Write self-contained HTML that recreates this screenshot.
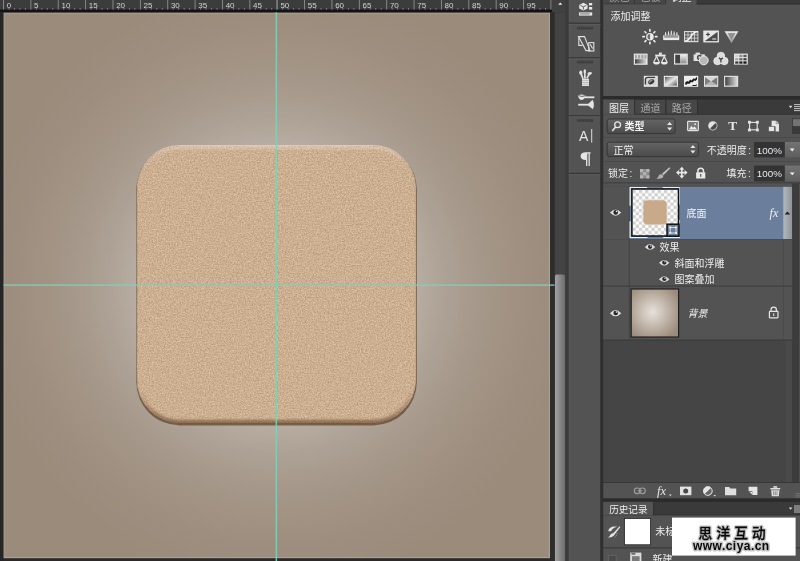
<!DOCTYPE html>
<html lang="zh-CN"><head><meta charset="utf-8"><title>Photoshop</title>
<style>
html,body{margin:0;padding:0;background:#282828;}
body{width:800px;height:561px;overflow:hidden;position:relative;font-family:'Liberation Sans','Noto Sans CJK SC',sans-serif;}
svg{position:absolute;left:0;top:0;display:block}
text{font-family:'Liberation Sans','Noto Sans CJK SC',sans-serif;}
</style></head><body>
<svg width="800" height="561" viewBox="0 0 800 561" style="will-change:transform">
<defs>
<radialGradient id="bgg" gradientUnits="userSpaceOnUse" cx="276" cy="285" r="340">
<stop offset="0" stop-color="#dcd5ce"/>
<stop offset="0.2" stop-color="#cdc4bc"/>
<stop offset="0.41" stop-color="#b8ada2"/>
<stop offset="0.5" stop-color="#ada195"/>
<stop offset="0.62" stop-color="#a49688"/>
<stop offset="0.76" stop-color="#9e8e7f"/>
<stop offset="0.88" stop-color="#9b8b7b"/>
<stop offset="1" stop-color="#9b8b7b"/>
</radialGradient>
<filter id="cork" x="0" y="0" width="100%" height="100%" color-interpolation-filters="sRGB">
<feTurbulence type="fractalNoise" baseFrequency="0.75" numOctaves="2" seed="5" result="n"/>
<feColorMatrix in="n" type="matrix" values="1 0 0 0 0  1 0 0 0 0  1 0 0 0 0  0 0 0 0 1" result="g"/>
<feGaussianBlur in="g" stdDeviation="0.4" result="gb"/>
<feComposite in="SourceGraphic" in2="gb" operator="arithmetic" k1="0" k2="1" k3="0.3" k4="-0.15" result="m"/>
<feComposite in="m" in2="SourceGraphic" operator="in"/>
</filter>
<clipPath id="sqclip"><rect x="137.1" y="146" width="278.5" height="277.3" rx="42.6"/></clipPath>
<filter id="b1" x="-5%" y="-5%" width="110%" height="110%"><feGaussianBlur stdDeviation="1.1"/></filter>
<linearGradient id="bev" gradientUnits="userSpaceOnUse" x1="0" y1="146" x2="0" y2="423.3"><stop offset="0" stop-color="#fff" stop-opacity="0.24"/><stop offset="0.08" stop-color="#fff" stop-opacity="0"/><stop offset="0.88" stop-color="#5a3c20" stop-opacity="0"/><stop offset="1" stop-color="#5a3c20" stop-opacity="0.55"/></linearGradient>
<linearGradient id="thumbg" x1="0" x2="1" y1="0" y2="0"><stop offset="0" stop-color="#a2a2a2"/><stop offset="1" stop-color="#6b6b6b"/></linearGradient>
<linearGradient id="ddg" x1="0" x2="0" y1="0" y2="1"><stop offset="0" stop-color="#646464"/><stop offset="1" stop-color="#4b4b4b"/></linearGradient>
<linearGradient id="btng" x1="0" x2="0" y1="0" y2="1"><stop offset="0" stop-color="#727272"/><stop offset="1" stop-color="#5f5f5f"/></linearGradient>
<linearGradient id="icg" x1="0" x2="0" y1="0" y2="1"><stop offset="0" stop-color="#f0f0f0"/><stop offset="1" stop-color="#8c8c8c"/></linearGradient>
<linearGradient id="ich" x1="0" x2="1" y1="0" y2="0"><stop offset="0" stop-color="#efefef"/><stop offset="1" stop-color="#6a6a6a"/></linearGradient>
<linearGradient id="ichr" x1="0" x2="1" y1="0" y2="0"><stop offset="0" stop-color="#444"/><stop offset="1" stop-color="#dadada"/></linearGradient>
<linearGradient id="post" x1="0" x2="1" y1="0" y2="1"><stop offset="0" stop-color="#555"/><stop offset="0.22" stop-color="#999"/><stop offset="0.5" stop-color="#e8e8e8"/><stop offset="0.78" stop-color="#999"/><stop offset="1" stop-color="#505050"/></linearGradient>
<linearGradient id="icd" x1="0" x2="1" y1="0" y2="1"><stop offset="0" stop-color="#f2f2f2"/><stop offset="1" stop-color="#5c5c5c"/></linearGradient>
<radialGradient id="lyrbg" cx="0.45" cy="0.48" r="0.62"><stop offset="0" stop-color="#e6e1dc"/><stop offset="0.45" stop-color="#c6bbb0"/><stop offset="1" stop-color="#9c8c7c"/></radialGradient>
<pattern id="chk" x="632.6" y="190" width="6.3" height="6.3" patternUnits="userSpaceOnUse"><rect width="6.3" height="6.3" fill="#fdfdfd"/><rect width="3.15" height="3.15" fill="#cfcfcf"/><rect x="3.15" y="3.15" width="3.15" height="3.15" fill="#cfcfcf"/></pattern>
<g id="eye"><path d="M-5.7 0.2 Q0 -6.6 5.7 0.2 Q0 6.4 -5.7 0.2Z" fill="#dedede"/><path d="M-5.2 -0.6 Q0 -6 5.2 -0.6" fill="none" stroke="#2e2e2e" stroke-width="0.7" opacity="0.7"/><circle cx="0.1" cy="0" r="2.3" fill="#262626"/><circle cx="0.9" cy="-0.9" r="0.8" fill="#e8e8e8"/></g>
<linearGradient id="icgv" x1="0" x2="0" y1="0" y2="1"><stop offset="0" stop-color="#555"/><stop offset="1" stop-color="#ddd"/></linearGradient>
<linearGradient id="sbg" x1="0" x2="1" y1="0" y2="0"><stop offset="0" stop-color="#b4b8be"/><stop offset="1" stop-color="#8f949c"/></linearGradient>
</defs>

<rect width="800" height="561" fill="#2a2a2a"/>
<rect x="3.3" y="12.5" width="546.7" height="545.7" fill="url(#bgg)"/>
<rect x="3.9" y="13.1" width="545.5" height="544.5" fill="none" stroke="#fff" stroke-opacity="0.2" stroke-width="1"/>
<rect x="0" y="0" width="552" height="9.6" fill="#3c3c3c"/>
<rect x="0" y="9.6" width="552" height="2.7" fill="#141414"/>
<rect x="0" y="12.3" width="3.4" height="549" fill="#262626"/>
<g><rect x="3.05" y="0" width="0.9" height="9.6" fill="#8e8e8e"/><text x="6.70" y="7.9" font-size="8" fill="#d2d2d2">0</text><rect x="8.52" y="8" width="0.9" height="1.6" fill="#8a8a8a"/><rect x="14.00" y="8" width="0.9" height="1.6" fill="#8a8a8a"/><rect x="19.47" y="8" width="0.9" height="1.6" fill="#8a8a8a"/><rect x="24.95" y="8" width="0.9" height="1.6" fill="#8a8a8a"/><rect x="30.42" y="0" width="0.9" height="9.6" fill="#8e8e8e"/><text x="34.07" y="7.9" font-size="8" fill="#d2d2d2">5</text><rect x="35.89" y="8" width="0.9" height="1.6" fill="#8a8a8a"/><rect x="41.37" y="8" width="0.9" height="1.6" fill="#8a8a8a"/><rect x="46.84" y="8" width="0.9" height="1.6" fill="#8a8a8a"/><rect x="52.32" y="8" width="0.9" height="1.6" fill="#8a8a8a"/><rect x="57.79" y="0" width="0.9" height="9.6" fill="#8e8e8e"/><text x="61.44" y="7.9" font-size="8" fill="#d2d2d2">10</text><rect x="63.26" y="8" width="0.9" height="1.6" fill="#8a8a8a"/><rect x="68.74" y="8" width="0.9" height="1.6" fill="#8a8a8a"/><rect x="74.21" y="8" width="0.9" height="1.6" fill="#8a8a8a"/><rect x="79.69" y="8" width="0.9" height="1.6" fill="#8a8a8a"/><rect x="85.16" y="0" width="0.9" height="9.6" fill="#8e8e8e"/><text x="88.81" y="7.9" font-size="8" fill="#d2d2d2">15</text><rect x="90.63" y="8" width="0.9" height="1.6" fill="#8a8a8a"/><rect x="96.11" y="8" width="0.9" height="1.6" fill="#8a8a8a"/><rect x="101.58" y="8" width="0.9" height="1.6" fill="#8a8a8a"/><rect x="107.06" y="8" width="0.9" height="1.6" fill="#8a8a8a"/><rect x="112.53" y="0" width="0.9" height="9.6" fill="#8e8e8e"/><text x="116.18" y="7.9" font-size="8" fill="#d2d2d2">20</text><rect x="118.00" y="8" width="0.9" height="1.6" fill="#8a8a8a"/><rect x="123.48" y="8" width="0.9" height="1.6" fill="#8a8a8a"/><rect x="128.95" y="8" width="0.9" height="1.6" fill="#8a8a8a"/><rect x="134.43" y="8" width="0.9" height="1.6" fill="#8a8a8a"/><rect x="139.90" y="0" width="0.9" height="9.6" fill="#8e8e8e"/><text x="143.55" y="7.9" font-size="8" fill="#d2d2d2">25</text><rect x="145.37" y="8" width="0.9" height="1.6" fill="#8a8a8a"/><rect x="150.85" y="8" width="0.9" height="1.6" fill="#8a8a8a"/><rect x="156.32" y="8" width="0.9" height="1.6" fill="#8a8a8a"/><rect x="161.80" y="8" width="0.9" height="1.6" fill="#8a8a8a"/><rect x="167.27" y="0" width="0.9" height="9.6" fill="#8e8e8e"/><text x="170.92" y="7.9" font-size="8" fill="#d2d2d2">30</text><rect x="172.74" y="8" width="0.9" height="1.6" fill="#8a8a8a"/><rect x="178.22" y="8" width="0.9" height="1.6" fill="#8a8a8a"/><rect x="183.69" y="8" width="0.9" height="1.6" fill="#8a8a8a"/><rect x="189.17" y="8" width="0.9" height="1.6" fill="#8a8a8a"/><rect x="194.64" y="0" width="0.9" height="9.6" fill="#8e8e8e"/><text x="198.29" y="7.9" font-size="8" fill="#d2d2d2">35</text><rect x="200.11" y="8" width="0.9" height="1.6" fill="#8a8a8a"/><rect x="205.59" y="8" width="0.9" height="1.6" fill="#8a8a8a"/><rect x="211.06" y="8" width="0.9" height="1.6" fill="#8a8a8a"/><rect x="216.54" y="8" width="0.9" height="1.6" fill="#8a8a8a"/><rect x="222.01" y="0" width="0.9" height="9.6" fill="#8e8e8e"/><text x="225.66" y="7.9" font-size="8" fill="#d2d2d2">40</text><rect x="227.48" y="8" width="0.9" height="1.6" fill="#8a8a8a"/><rect x="232.96" y="8" width="0.9" height="1.6" fill="#8a8a8a"/><rect x="238.43" y="8" width="0.9" height="1.6" fill="#8a8a8a"/><rect x="243.91" y="8" width="0.9" height="1.6" fill="#8a8a8a"/><rect x="249.38" y="0" width="0.9" height="9.6" fill="#8e8e8e"/><text x="253.03" y="7.9" font-size="8" fill="#d2d2d2">45</text><rect x="254.85" y="8" width="0.9" height="1.6" fill="#8a8a8a"/><rect x="260.33" y="8" width="0.9" height="1.6" fill="#8a8a8a"/><rect x="265.80" y="8" width="0.9" height="1.6" fill="#8a8a8a"/><rect x="271.28" y="8" width="0.9" height="1.6" fill="#8a8a8a"/><rect x="276.75" y="0" width="0.9" height="9.6" fill="#8e8e8e"/><text x="280.40" y="7.9" font-size="8" fill="#d2d2d2">50</text><rect x="282.22" y="8" width="0.9" height="1.6" fill="#8a8a8a"/><rect x="287.70" y="8" width="0.9" height="1.6" fill="#8a8a8a"/><rect x="293.17" y="8" width="0.9" height="1.6" fill="#8a8a8a"/><rect x="298.65" y="8" width="0.9" height="1.6" fill="#8a8a8a"/><rect x="304.12" y="0" width="0.9" height="9.6" fill="#8e8e8e"/><text x="307.77" y="7.9" font-size="8" fill="#d2d2d2">55</text><rect x="309.59" y="8" width="0.9" height="1.6" fill="#8a8a8a"/><rect x="315.07" y="8" width="0.9" height="1.6" fill="#8a8a8a"/><rect x="320.54" y="8" width="0.9" height="1.6" fill="#8a8a8a"/><rect x="326.02" y="8" width="0.9" height="1.6" fill="#8a8a8a"/><rect x="331.49" y="0" width="0.9" height="9.6" fill="#8e8e8e"/><text x="335.14" y="7.9" font-size="8" fill="#d2d2d2">60</text><rect x="336.96" y="8" width="0.9" height="1.6" fill="#8a8a8a"/><rect x="342.44" y="8" width="0.9" height="1.6" fill="#8a8a8a"/><rect x="347.91" y="8" width="0.9" height="1.6" fill="#8a8a8a"/><rect x="353.39" y="8" width="0.9" height="1.6" fill="#8a8a8a"/><rect x="358.86" y="0" width="0.9" height="9.6" fill="#8e8e8e"/><text x="362.51" y="7.9" font-size="8" fill="#d2d2d2">65</text><rect x="364.33" y="8" width="0.9" height="1.6" fill="#8a8a8a"/><rect x="369.81" y="8" width="0.9" height="1.6" fill="#8a8a8a"/><rect x="375.28" y="8" width="0.9" height="1.6" fill="#8a8a8a"/><rect x="380.76" y="8" width="0.9" height="1.6" fill="#8a8a8a"/><rect x="386.23" y="0" width="0.9" height="9.6" fill="#8e8e8e"/><text x="389.88" y="7.9" font-size="8" fill="#d2d2d2">70</text><rect x="391.70" y="8" width="0.9" height="1.6" fill="#8a8a8a"/><rect x="397.18" y="8" width="0.9" height="1.6" fill="#8a8a8a"/><rect x="402.65" y="8" width="0.9" height="1.6" fill="#8a8a8a"/><rect x="408.13" y="8" width="0.9" height="1.6" fill="#8a8a8a"/><rect x="413.60" y="0" width="0.9" height="9.6" fill="#8e8e8e"/><text x="417.25" y="7.9" font-size="8" fill="#d2d2d2">75</text><rect x="419.07" y="8" width="0.9" height="1.6" fill="#8a8a8a"/><rect x="424.55" y="8" width="0.9" height="1.6" fill="#8a8a8a"/><rect x="430.02" y="8" width="0.9" height="1.6" fill="#8a8a8a"/><rect x="435.50" y="8" width="0.9" height="1.6" fill="#8a8a8a"/><rect x="440.97" y="0" width="0.9" height="9.6" fill="#8e8e8e"/><text x="444.62" y="7.9" font-size="8" fill="#d2d2d2">80</text><rect x="446.44" y="8" width="0.9" height="1.6" fill="#8a8a8a"/><rect x="451.92" y="8" width="0.9" height="1.6" fill="#8a8a8a"/><rect x="457.39" y="8" width="0.9" height="1.6" fill="#8a8a8a"/><rect x="462.87" y="8" width="0.9" height="1.6" fill="#8a8a8a"/><rect x="468.34" y="0" width="0.9" height="9.6" fill="#8e8e8e"/><text x="471.99" y="7.9" font-size="8" fill="#d2d2d2">85</text><rect x="473.81" y="8" width="0.9" height="1.6" fill="#8a8a8a"/><rect x="479.29" y="8" width="0.9" height="1.6" fill="#8a8a8a"/><rect x="484.76" y="8" width="0.9" height="1.6" fill="#8a8a8a"/><rect x="490.24" y="8" width="0.9" height="1.6" fill="#8a8a8a"/><rect x="495.71" y="0" width="0.9" height="9.6" fill="#8e8e8e"/><text x="499.36" y="7.9" font-size="8" fill="#d2d2d2">90</text><rect x="501.18" y="8" width="0.9" height="1.6" fill="#8a8a8a"/><rect x="506.66" y="8" width="0.9" height="1.6" fill="#8a8a8a"/><rect x="512.13" y="8" width="0.9" height="1.6" fill="#8a8a8a"/><rect x="517.61" y="8" width="0.9" height="1.6" fill="#8a8a8a"/><rect x="523.08" y="0" width="0.9" height="9.6" fill="#8e8e8e"/><text x="526.73" y="7.9" font-size="8" fill="#d2d2d2">95</text><rect x="528.55" y="8" width="0.9" height="1.6" fill="#8a8a8a"/><rect x="534.03" y="8" width="0.9" height="1.6" fill="#8a8a8a"/><rect x="539.50" y="8" width="0.9" height="1.6" fill="#8a8a8a"/><rect x="544.98" y="8" width="0.9" height="1.6" fill="#8a8a8a"/><rect x="550.45" y="0" width="0.9" height="9.6" fill="#8e8e8e"/></g>
<rect x="276.4" y="0" width="1" height="9.6" fill="#7d8a86"/>
<rect x="550" y="12.3" width="4.6" height="549" fill="#2d2d2d"/>
<rect x="552" y="0" width="16.5" height="12.3" fill="#404040"/>
<rect x="554.6" y="12.3" width="13.9" height="549" fill="#434343"/>
<path d="M558.2 4.7 L560.3 2.4 L562.4 4.7Z" fill="#f0f0f0"/>
<rect x="555" y="274.5" width="10.2" height="290" rx="2" fill="url(#thumbg)"/>
<rect x="565.4" y="0" width="3.4" height="561" fill="#3b3b3b"/>
<g>
<rect x="136.3" y="145.8" width="280.5" height="279.6" rx="43.5" fill="#6a523c" opacity="0.85"/>
<rect x="136.9" y="145.1" width="279" height="277.6" rx="43" fill="#dfcbb0"/>
<rect x="137.1" y="146" width="278.5" height="277.3" rx="42.6" fill="#ccae91" filter="url(#cork)"/>
<g clip-path="url(#sqclip)"><rect x="137.1" y="146" width="278.5" height="277.3" rx="42.6" fill="none" stroke="url(#bev)" stroke-width="7" filter="url(#b1)"/></g>
</g>
<rect x="275.6" y="12.3" width="1.5" height="549" fill="#7cd2b8" opacity="0.9"/>
<rect x="3.5" y="284.4" width="551" height="1.4" fill="#7cd2b8" opacity="0.9"/>
<rect x="568.8" y="0" width="31.7" height="561" fill="#535353"/>
<rect x="568.8" y="0" width="0.8" height="561" fill="#5b5b5b"/>
<rect x="600.5" y="0" width="2.7" height="561" fill="#2f2f2f"/>
<rect x="568.8" y="22.6" width="31.7" height="1.3" fill="#363636"/><rect x="568.8" y="23.9" width="31.7" height="0.8" fill="#5e5e5e"/>
<rect x="568.8" y="57.2" width="31.7" height="1.3" fill="#363636"/><rect x="568.8" y="58.5" width="31.7" height="0.8" fill="#5e5e5e"/>
<rect x="568.8" y="115.2" width="31.7" height="1.3" fill="#363636"/><rect x="568.8" y="116.5" width="31.7" height="0.8" fill="#5e5e5e"/>
<rect x="568.8" y="172.8" width="31.7" height="1.3" fill="#363636"/><rect x="568.8" y="174.1" width="31.7" height="0.8" fill="#5e5e5e"/>
<rect x="577" y="26.8" width="16" height="2.6" fill="#3c3c3c"/>
<rect x="578.3" y="26.8" width="0.7" height="2.6" fill="#4b4b4b"/><rect x="580.3" y="26.8" width="0.7" height="2.6" fill="#4b4b4b"/><rect x="582.3" y="26.8" width="0.7" height="2.6" fill="#4b4b4b"/><rect x="584.3" y="26.8" width="0.7" height="2.6" fill="#4b4b4b"/><rect x="586.3" y="26.8" width="0.7" height="2.6" fill="#4b4b4b"/><rect x="588.3" y="26.8" width="0.7" height="2.6" fill="#4b4b4b"/><rect x="590.3" y="26.8" width="0.7" height="2.6" fill="#4b4b4b"/>
<rect x="577" y="60.8" width="16" height="2.6" fill="#3c3c3c"/>
<rect x="578.3" y="60.8" width="0.7" height="2.6" fill="#4b4b4b"/><rect x="580.3" y="60.8" width="0.7" height="2.6" fill="#4b4b4b"/><rect x="582.3" y="60.8" width="0.7" height="2.6" fill="#4b4b4b"/><rect x="584.3" y="60.8" width="0.7" height="2.6" fill="#4b4b4b"/><rect x="586.3" y="60.8" width="0.7" height="2.6" fill="#4b4b4b"/><rect x="588.3" y="60.8" width="0.7" height="2.6" fill="#4b4b4b"/><rect x="590.3" y="60.8" width="0.7" height="2.6" fill="#4b4b4b"/>
<rect x="577" y="119.2" width="16" height="2.6" fill="#3c3c3c"/>
<rect x="578.3" y="119.2" width="0.7" height="2.6" fill="#4b4b4b"/><rect x="580.3" y="119.2" width="0.7" height="2.6" fill="#4b4b4b"/><rect x="582.3" y="119.2" width="0.7" height="2.6" fill="#4b4b4b"/><rect x="584.3" y="119.2" width="0.7" height="2.6" fill="#4b4b4b"/><rect x="586.3" y="119.2" width="0.7" height="2.6" fill="#4b4b4b"/><rect x="588.3" y="119.2" width="0.7" height="2.6" fill="#4b4b4b"/><rect x="590.3" y="119.2" width="0.7" height="2.6" fill="#4b4b4b"/>
<g fill="#e6e6e6"><path d="M579.2 5 L583.4 2.8 L587.6 5 L587.6 8.6 L583.4 10.6 L579.2 8.6Z"/><rect x="589" y="3" width="3.2" height="2.4"/><rect x="589" y="7" width="3.2" height="2.6"/><rect x="579" y="12.4" width="13.2" height="3.2"/></g>
<path d="M580.4 5.4 L583.4 6.8 L586.4 5.4 M583.4 6.8 L583.4 9.6" stroke="#555" stroke-width="0.9" fill="none"/><rect x="580" y="13.3" width="9.6" height="1.2" fill="#8a8a8a"/>
<g fill="none" stroke="#e0e0e0" stroke-width="1.1"><path d="M578.5 36.6 L584.5 36.6 L590 50.6 L586 50.6 Z"/><path d="M578.8 37.4 L578.8 45.4 L582.4 45.4"/><rect x="588.8" y="42.6" width="5" height="8.4"/><path d="M590.2 44.2 L592.6 48.6"/></g>
<g fill="#e2e2e2"><rect x="582" y="78.6" width="7" height="7.4"/><path d="M579 72.6 q1.2 -3.4 3 -1.4 q0.8 1.6 0.2 3 l1.6 4.2 l-1.6 0.6 l-1.6 -4 q-1.4 -0.6 -1.6 -2.4z"/><path d="M583.6 70.6 q1.2 -2.6 2.4 0 q0.2 2 -0.4 3 l0.2 4.8 l-1.8 0 l0.1 -4.8 q-0.7 -1.2 -0.5 -3z"/><path d="M587.4 73.2 q2.4 -2.4 4.8 -0.4 q-0.6 2 -2.6 2.4 l-2 3.4 l-1.4 -0.8 l1.8 -3.2 q-0.8 -0.6 -0.6 -1.4z"/></g>
<path d="M582.2 80.6h6.6M582.2 82.5h6.6M582.2 84.3h6.6" stroke="#a2a2a2" stroke-width="0.6"/>
<g fill="#e4e4e4"><path d="M578 95.4 q3.8 -2 7.6 0.4 q-0.8 3.8 -3.8 4.2 q-3.2 -0.4 -3.8 -4.6z"/><rect x="585" y="96.4" width="9.4" height="1.8"/><rect x="578.2" y="103.8" width="10" height="1.8"/><path d="M587.2 104.7 L592.6 99.8 q2.6 4.6 0.2 9.4z"/></g><path d="M578.6 95.6 q3.2 1.6 6.4 0.2" stroke="#555" stroke-width="0.9" fill="none"/>
<text x="579" y="140.6" font-size="14" fill="#e6e6e6">A</text><rect x="591.2" y="129" width="1" height="13.6" fill="#dcdcdc"/>
<g fill="#e4e4e4"><path d="M586 152.2 h4.6 v1.2 h-0.8 v12.6 h-1.3 v-12.6 h-1.2 v12.6 h-1.3 v-6 q-5.4 0 -5.4 -3.9 q0 -3.9 5.4 -3.9z"/></g>
<rect x="603.2" y="0" width="196.8" height="96" fill="#535353"/>
<rect x="603.2" y="0" width="62" height="3.6" fill="#474747"/><rect x="603.2" y="3.4" width="62" height="0.9" fill="#3a3a3a"/>
<rect x="634" y="0" width="0.9" height="3.6" fill="#333"/><rect x="665.2" y="0" width="0.9" height="3.8" fill="#333"/>
<rect x="696.6" y="0" width="103.4" height="4" fill="#3a3a3a"/><rect x="696.6" y="3.6" width="103.4" height="0.9" fill="#2c2c2c"/>
<g font-size="10"><text x="609.4" y="0.8" fill="#aaa">颜色</text><text x="640.6" y="0.8" fill="#aaa">色板</text><text x="671.4" y="0.8" fill="#f2f2f2">调整</text></g>
<text x="610.6" y="19.8" font-size="10" fill="#ececec">添加调整</text>
<rect x="603.2" y="96" width="196.8" height="3.5" fill="#2b2b2b"/>
<g><path d="M655.50 36.70 L656.90 36.70" stroke="#e8e8e8" stroke-width="1.7" stroke-linecap="round"/><path d="M653.86 40.66 L654.85 41.65" stroke="#e8e8e8" stroke-width="1.7" stroke-linecap="round"/><path d="M649.90 42.30 L649.90 43.70" stroke="#e8e8e8" stroke-width="1.7" stroke-linecap="round"/><path d="M645.94 40.66 L644.95 41.65" stroke="#e8e8e8" stroke-width="1.7" stroke-linecap="round"/><path d="M644.30 36.70 L642.90 36.70" stroke="#e8e8e8" stroke-width="1.7" stroke-linecap="round"/><path d="M645.94 32.74 L644.95 31.75" stroke="#e8e8e8" stroke-width="1.7" stroke-linecap="round"/><path d="M649.90 31.10 L649.90 29.70" stroke="#e8e8e8" stroke-width="1.7" stroke-linecap="round"/><path d="M653.86 32.74 L654.85 31.75" stroke="#e8e8e8" stroke-width="1.7" stroke-linecap="round"/><circle cx="649.9" cy="36.7" r="3.8" fill="#ededed"/><path d="M650.1 34.0 a2.7 2.7 0 0 0 0 5.4z" fill="#6c6c6c"/></g>
<path d="M663.4 38.6 L663.4 35.4 L664.6 35.4 L664.6 33.8 L666.6 33.8 L666.6 35 L667.6 35 L667.6 33 L669.2 33 L669.2 34.6 L670.4 34.6 L670.4 32.6 L672 32.6 L672 34.6 L673.2 34.6 L673.2 33 L674.8 33 L674.8 35 L675.8 35 L675.8 33.8 L677.8 33.8 L677.8 35.4 L679 35.4 L679 38.6Z" fill="#9a9a9a"/>
<g fill="#ececec"><rect x="665.1" y="32.2" width="1" height="3.4"/><rect x="668" y="31.4" width="1" height="3.6"/><rect x="670.8" y="30.6" width="1" height="4"/><rect x="673.6" y="31.4" width="1" height="3.6"/><rect x="676.4" y="32.2" width="1" height="3.4"/><rect x="663.2" y="37.8" width="16" height="2.3"/><rect x="663.2" y="35.4" width="1" height="3"/><rect x="678.2" y="35.4" width="1" height="3"/></g>
<rect x="684" y="31" width="14.4" height="11.2" fill="#dadada"/><rect x="685.10" y="32.10" width="2.5" height="2.4" fill="#5a5a5a"/><rect x="688.40" y="32.10" width="2.5" height="2.4" fill="#5a5a5a"/><rect x="691.70" y="32.10" width="2.5" height="2.4" fill="#5a5a5a"/><rect x="695.00" y="32.10" width="2.5" height="2.4" fill="#5a5a5a"/><rect x="685.10" y="35.30" width="2.5" height="2.4" fill="#5a5a5a"/><rect x="688.40" y="35.30" width="2.5" height="2.4" fill="#5a5a5a"/><rect x="691.70" y="35.30" width="2.5" height="2.4" fill="#5a5a5a"/><rect x="695.00" y="35.30" width="2.5" height="2.4" fill="#5a5a5a"/><rect x="685.10" y="38.50" width="2.5" height="2.4" fill="#5a5a5a"/><rect x="688.40" y="38.50" width="2.5" height="2.4" fill="#5a5a5a"/><rect x="691.70" y="38.50" width="2.5" height="2.4" fill="#5a5a5a"/><rect x="695.00" y="38.50" width="2.5" height="2.4" fill="#5a5a5a"/><path d="M684.8 41.2 C691.6 41.2 690 31.8 697.6 31.8" stroke="#f4f4f4" stroke-width="1.5" fill="none"/>
<rect x="703.8" y="31" width="14.6" height="11" fill="#e4e4e4"/><path d="M704.6 41.2 L717.6 31.8 L717.6 41.2Z" fill="#4a4a4a"/><path d="M706 34.4h4M708 32.4v4" stroke="#333" stroke-width="1"/><path d="M712.2 39h4" stroke="#eee" stroke-width="1"/><rect x="703.8" y="31" width="14.6" height="11" fill="none" stroke="#eaeaea" stroke-width="0.9"/>
<path d="M724.6 31.2 L738.4 31.2 L731.5 43.2Z" fill="url(#icg)"/><path d="M727.6 33 L735.4 33 L731.5 39.8Z" fill="#7c7c7c" opacity="0.75"/>
<rect x="633.8" y="53.6" width="13.8" height="11.2" fill="#e6e6e6"/><rect x="635" y="54.8" width="11.4" height="3.8" fill="#a2a2a2"/><path d="M637.4 54.8v3.8M640.7 54.8v3.8M644 54.8v3.8" stroke="#e2e2e2" stroke-width="1"/><rect x="635" y="59.2" width="11.4" height="4.4" fill="url(#ichr)"/>
<g fill="#e8e8e8"><rect x="655.2" y="54.6" width="10.4" height="1.9"/><rect x="659" y="52.6" width="2.8" height="2.2"/><path d="M653 62 h7 q-0.5 2.6 -3.5 2.6 q-3 0 -3.5 -2.6z"/><path d="M660.8 62 h7 q-0.5 2.6 -3.5 2.6 q-3 0 -3.5 -2.6z"/></g><path d="M656.5 56.4 L653.8 62 M656.5 56.4 L659.2 62 M664.3 56.4 L661.6 62 M664.3 56.4 L667 62" stroke="#e8e8e8" stroke-width="1.2" fill="none"/>
<rect x="674" y="53.6" width="13.8" height="11" fill="#e6e6e6"/><rect x="675.2" y="54.8" width="5" height="8.6" fill="#444"/><rect x="680.2" y="54.8" width="6.4" height="8.6" fill="url(#icg)"/>
<g fill="#e2e2e2"><rect x="693.6" y="54.4" width="11.2" height="6.6"/><rect x="695.6" y="52.6" width="4.4" height="2.2"/></g><circle cx="699.6" cy="57.4" r="2.7" fill="#4e4e4e"/><circle cx="699.6" cy="57.4" r="1.2" fill="#cfcfcf"/><circle cx="703.8" cy="60.4" r="4.4" fill="#b8b8b8" stroke="#ececec" stroke-width="1"/>
<g fill="#dcdcdc" stroke="#f2f2f2" stroke-width="0.7"><circle cx="720.9" cy="56" r="3.8"/><circle cx="717.5" cy="61" r="3.8"/><circle cx="724.3" cy="61" r="3.8"/></g><path d="M720.9 59.6 l-2 -1.8 M720.9 59.6 l2 -1.8 M720.9 59.6 v3" stroke="#3c3c3c" stroke-width="1.3" fill="none"/>
<rect x="734" y="53.6" width="13.8" height="11" fill="#e6e6e6"/><rect x="735.2" y="54.8" width="3.2" height="2.3" fill="#cfcfcf"/><rect x="739.3" y="54.8" width="3.2" height="2.3" fill="#8e8e8e"/><rect x="743.4" y="54.8" width="3.2" height="2.3" fill="#5a5a5a"/><rect x="735.2" y="58.1" width="3.2" height="2.3" fill="#a8a8a8"/><rect x="739.3" y="58.1" width="3.2" height="2.3" fill="#6a6a6a"/><rect x="743.4" y="58.1" width="3.2" height="2.3" fill="#444"/><rect x="735.2" y="61.4" width="3.2" height="2.3" fill="#3c3c3c"/><rect x="739.3" y="61.4" width="3.2" height="2.3" fill="#222"/><rect x="743.4" y="61.4" width="3.2" height="2.3" fill="#111"/>
<rect x="643.8" y="75.8" width="14" height="11" fill="#e8e8e8"/><rect x="645" y="77" width="11.6" height="8.6" fill="#d4d4d4"/><path d="M645.4 84.6 L645.4 79 Q645.8 77.4 648 77.4 L655 77.4" stroke="#3c3c3c" stroke-width="1.4" fill="none"/><ellipse cx="651.2" cy="81.8" rx="3.3" ry="2.3" transform="rotate(-32 651.2 81.8)" fill="#3a3a3a"/><path d="M648.4 83.4 A3.3 2.3 -32 0 1 653.4 79.8Z" fill="#9a9a9a"/>
<rect x="663.8" y="75.8" width="14.2" height="11" fill="#e4e4e4"/><rect x="665" y="77" width="11.8" height="8.6" fill="url(#post)"/>
<rect x="684" y="75.8" width="14.2" height="11" fill="#eeeeee"/><path d="M685.2 84.4 L685.2 82.6 L687.2 81 L688.4 81.8 L690.4 79.6 L691.6 80.4 L693.6 78.2 L694.8 79 L697 76.8 L697 79.4 L695.4 81 L694.2 80.4 L692.4 82.6 L691 82 L689.2 84 L687.8 83.4 L686.4 84.8Z" fill="#1c1c1c"/><path d="M692.4 85.5 h3.6 l1 -0.9" stroke="#1c1c1c" stroke-width="1" fill="none"/>
<rect x="704" y="75.8" width="14.2" height="11" fill="#e6e6e6"/><path d="M705 77 L711.1 81.3 L705 85.6Z" fill="#808080"/><path d="M717.2 77 L711.1 81.3 L717.2 85.6Z" fill="#7a7a7a"/><path d="M705 77 L717.2 77 L711.1 81.3Z" fill="#d6d6d6"/><path d="M705 85.6 L717.2 85.6 L711.1 81.3Z" fill="#b4b4b4"/>
<rect x="724" y="75.8" width="14.2" height="11" fill="#dcdcdc"/><rect x="725.2" y="77" width="11.8" height="8.6" fill="url(#ichr)"/>
<rect x="603.2" y="99.5" width="196.8" height="15" fill="#3a3a3a"/>
<rect x="603.2" y="99.5" width="31" height="15.2" fill="#535353"/>
<rect x="635" y="100" width="30.4" height="14" fill="#474747"/><rect x="666.2" y="100" width="30.8" height="14" fill="#474747"/>
<rect x="634.2" y="99.5" width="0.9" height="14.6" fill="#2e2e2e"/><rect x="665.4" y="99.5" width="0.9" height="14.6" fill="#2e2e2e"/><rect x="697" y="99.5" width="0.9" height="14.6" fill="#2e2e2e"/>
<rect x="635" y="113.8" width="165" height="0.9" fill="#2e2e2e"/>
<g font-size="10"><text x="609" y="112" fill="#f0f0f0">图层</text><text x="640.4" y="112" fill="#a8a8a8">通道</text><text x="671.8" y="112" fill="#a8a8a8">路径</text></g>
<path d="M788.8 105.8 h3.6 l-1.8 2.4z" fill="#d8d8d8"/><path d="M794 104.6h6M794 106.6h6M794 108.6h6M794 110.6h6" stroke="#cfcfcf" stroke-width="0.9"/>
<rect x="603.2" y="114.7" width="196.8" height="71.5" fill="#535353"/>
<rect x="603.2" y="137.2" width="196.8" height="0.8" fill="#484848"/><rect x="603.2" y="161.2" width="196.8" height="0.8" fill="#484848"/>
<rect x="607.2" y="119" width="67.8" height="14.6" rx="2.2" fill="url(#ddg)" stroke="#333" stroke-width="0.9"/>
<circle cx="617.6" cy="124.8" r="2.9" fill="none" stroke="#e8e8e8" stroke-width="1.3"/><path d="M615.4 127.2 L612.6 130.4" stroke="#e8e8e8" stroke-width="1.5" stroke-linecap="round"/>
<text x="624.6" y="130.4" font-size="10" font-weight="bold" fill="#f2f2f2">类型</text>
<path d="M667 125 l2.6 -3 l2.6 3z M667 127.6 l2.6 3 l2.6 -3z" fill="#e6e6e6"/>
<rect x="687.6" y="121.4" width="10.8" height="9.2" rx="0.6" fill="#777" stroke="#e2e2e2" stroke-width="1.1"/><path d="M688.8 129.6 L691.4 126 L693 127.8 L694.6 126.6 L697.2 129.6Z" fill="#ededed"/><circle cx="695.2" cy="124.2" r="0.9" fill="#ededed"/>
<circle cx="712.8" cy="125.8" r="4.6" fill="#e2e2e2"/><path d="M710.1 128.5 A3.8 3.8 0 0 0 715.5 123.1Z" fill="#4a4a4a"/>
<text x="728.2" y="130.2" font-size="13.4" font-weight="bold" fill="#e8e8e8" style="font-family:'Liberation Serif',serif">T</text>
<rect x="749.6" y="122.4" width="7.6" height="7.4" fill="none" stroke="#e4e4e4" stroke-width="1.1"/><g fill="#e4e4e4"><rect x="748" y="120.8" width="2.8" height="2.8"/><rect x="756" y="120.8" width="2.8" height="2.8"/><rect x="748" y="128.6" width="2.8" height="2.8"/><rect x="756" y="128.6" width="2.8" height="2.8"/></g>
<path d="M771.6 120.8 h4.6 l2.8 2.8 v7.8 h-3.4 v-5 h-4z" fill="#e4e4e4"/><path d="M776.2 120.8 v2.8 h2.8" fill="none" stroke="#777" stroke-width="0.7"/><rect x="768.6" y="126.4" width="5.8" height="5" fill="#e4e4e4" stroke="#535353" stroke-width="0.6"/>
<rect x="792.6" y="118.8" width="8" height="7.4" fill="#737373"/><rect x="792.6" y="126.2" width="8" height="7.2" fill="#3a3a3a"/><rect x="792.6" y="118.8" width="8" height="14.6" fill="none" stroke="#333" stroke-width="0.7"/>
<rect x="607.2" y="142.2" width="91.2" height="14.4" rx="2.2" fill="url(#ddg)" stroke="#333" stroke-width="0.9"/>
<text x="613.6" y="154.2" font-size="10" fill="#f2f2f2">正常</text>
<path d="M690.4 148 l2.5 -2.9 l2.5 2.9z M690.4 150.6 l2.5 2.9 l2.5 -2.9z" fill="#e6e6e6"/>
<text x="706.8" y="153.6" font-size="10" fill="#ececec">不透明度<tspan dx="1.4">:</tspan></text>
<rect x="754" y="142" width="30" height="15.4" fill="#333"/><text x="756.8" y="153.8" font-size="9.8" fill="#e8e8f0">100%</text>
<rect x="784.2" y="142" width="15.8" height="15.4" fill="url(#btng)"/><rect x="784" y="142" width="0.8" height="15.4" fill="#333"/><path d="M789.8 148.6 h4.8 l-2.4 2.8z" fill="#f0f0f0"/>
<text x="608" y="176.6" font-size="10" fill="#ececec">锁定<tspan dx="1.6">:</tspan></text>
<rect x="640" y="169" width="9.4" height="9.4" fill="#8a8a8a"/><rect x="640.00" y="169.00" width="3.13" height="3.13" fill="#b4b4b4"/><rect x="646.26" y="169.00" width="3.13" height="3.13" fill="#b4b4b4"/><rect x="643.13" y="172.13" width="3.13" height="3.13" fill="#b4b4b4"/><rect x="640.00" y="175.26" width="3.13" height="3.13" fill="#b4b4b4"/><rect x="646.26" y="175.26" width="3.13" height="3.13" fill="#b4b4b4"/>
<path d="M669.4 167.2 L670.4 168.2 L663.4 175.2 L662 173.8Z" fill="#c4c4c4"/><path d="M656.4 178.4 q2 -0.8 2.4 -2.8 q1.4 -2.4 4 -0.6 q1.4 2.2 -1.2 3.2 q-2.6 0.8 -5.2 0.2z" fill="#b0b0b0"/>
<g fill="#e8e8e8"><path d="M681.8 166.8 l2.6 3 h-1.8 v2 h2 v-1.8 l3 2.6 l-3 2.6 v-1.8 h-2 v2 h1.8 l-2.6 3 l-2.6 -3 h1.8 v-2 h-2 v1.8 l-3 -2.6 l3 -2.6 v1.8 h2 v-2 h-1.8z"/></g>
<path d="M697.9 172.6 v-1.6 a2.8 2.8 0 0 1 5.6 0 v1.6" fill="none" stroke="#e8e8e8" stroke-width="1.5"/><rect x="696.1" y="172.2" width="9.2" height="6.4" rx="0.6" fill="#e8e8e8"/><rect x="700.1" y="174" width="1.2" height="2.8" fill="#555"/>
<text x="726.6" y="177.2" font-size="10" fill="#ececec">填充<tspan dx="1.4">:</tspan></text>
<rect x="754" y="165.6" width="30" height="15.8" fill="#333"/><text x="756.8" y="177.2" font-size="9.8" fill="#e8e8f0">100%</text>
<rect x="784.2" y="165.6" width="15.8" height="15.8" fill="url(#btng)"/><rect x="784" y="165.6" width="0.8" height="15.8" fill="#333"/><path d="M789.8 172.4 h4.8 l-2.4 2.8z" fill="#f0f0f0"/>
<rect x="603.2" y="182.4" width="196.8" height="0.9" fill="#3a3a3a"/>
<rect x="603.2" y="186.2" width="189" height="296.4" fill="#454545"/>
<rect x="785.6" y="340" width="6.4" height="142.6" fill="#4a4a4a"/><rect x="792" y="183.4" width="8" height="299.2" fill="#3c3c3c"/><rect x="799.2" y="183.4" width="0.8" height="299.2" fill="#545454"/>
<rect x="603.2" y="186.2" width="189" height="153.6" fill="#535353"/>
<rect x="629.4" y="186.8" width="153.8" height="52.2" fill="#6b7f9c"/>
<rect x="783.2" y="186.8" width="8.8" height="52.2" fill="url(#sbg)"/>
<path d="M784.6 214.6 h5.6 l-2.8 -3z" fill="#1e1e1e"/>
<rect x="783.2" y="239" width="0.8" height="100.8" fill="#4a4a4a"/>
<rect x="628.8" y="186.2" width="0.9" height="153.6" fill="#404040"/>
<rect x="603.2" y="285.6" width="189" height="1" fill="#3c3c3c"/><rect x="603.2" y="339.6" width="189" height="1" fill="#3a3a3a"/><rect x="603.2" y="239" width="189" height="0.7" fill="#454c56"/>
<use href="#eye" x="615.6" y="212.4"/><use href="#eye" x="615.6" y="313"/>
<use href="#eye" x="650" y="246.8" transform="translate(650 246.8) scale(0.92) translate(-650 -246.8)"/><use href="#eye" x="664.2" y="262.6" transform="translate(664.2 262.6) scale(0.92) translate(-664.2 -262.6)"/><use href="#eye" x="664.2" y="279" transform="translate(664.2 279) scale(0.92) translate(-664.2 -279)"/>
<path d="M630.1 187.5 H679.3 V237.5 H630.1Z" fill="none" stroke="#eef2f6" stroke-width="1.2" stroke-dasharray="17 15.6 16.6 0" />
<rect x="631.9" y="189" width="46.6" height="47" fill="url(#chk)" stroke="#111" stroke-width="1.5"/>
<rect x="643.3" y="200.3" width="23.4" height="24.2" rx="3.8" fill="#c8aa8b"/>
<rect x="667" y="224.2" width="12" height="12" fill="#6b7f9c" stroke="#111" stroke-width="1.5"/><rect x="670.2" y="227.4" width="5.8" height="5.6" fill="none" stroke="#e6e6e6" stroke-width="0.9"/><g fill="#e6e6e6"><rect x="669.2" y="226.4" width="2" height="2"/><rect x="675" y="226.4" width="2" height="2"/><rect x="669.2" y="232" width="2" height="2"/><rect x="675" y="232" width="2" height="2"/></g>
<text x="686.6" y="216.8" font-size="10" fill="#f4f4f4">底面</text>
<text x="769.6" y="217" font-size="12" font-style="italic" fill="#f0f0f0" style="font-family:'Liberation Serif',serif">fx</text>
<g font-size="10" fill="#ececec"><text x="659.6" y="250.6">效果</text><text x="674.6" y="266.6">斜面和浮雕</text><text x="674.6" y="282.8">图案叠加</text></g>
<rect x="631.2" y="289" width="47.4" height="48" fill="url(#lyrbg)" stroke="#1c1c1c" stroke-width="1.1"/>
<text x="687.6" y="316.6" font-size="10" font-style="italic" fill="#f0f0f0">背景</text>
<path d="M771 311.4 v-1.6 a2.7 2.7 0 0 1 5.4 0 v1.6" fill="none" stroke="#e4e4e4" stroke-width="1.2"/><rect x="769.4" y="311.4" width="8.6" height="6.4" rx="0.5" fill="none" stroke="#e4e4e4" stroke-width="1.2"/><rect x="773.2" y="313.4" width="1" height="2.6" fill="#e4e4e4"/>
<rect x="603.2" y="482.6" width="196.8" height="16" fill="#535353"/><rect x="603.2" y="482" width="196.8" height="0.9" fill="#363636"/>
<g fill="none" stroke="#9c9c9c" stroke-width="1.2"><rect x="634.4" y="488" width="5.6" height="5.6" rx="2.6"/><rect x="639.6" y="488" width="5.6" height="5.6" rx="2.6"/><path d="M637.6 490.8h4.6"/></g>
<text x="657" y="495" font-size="12.5" font-style="italic" fill="#e6e6e6" style="font-family:'Liberation Serif',serif">fx</text><path d="M669 494.6 h2.6 l-1.3 1.6z" fill="#e0e0e0"/>
<rect x="680" y="486.6" width="11.4" height="8.6" fill="#e2e2e2"/><circle cx="685.7" cy="490.9" r="2.5" fill="#4a4a4a"/>
<circle cx="707.8" cy="491" r="4.4" fill="#e4e4e4"/><path d="M704.7 494.1 A4.4 4.4 0 0 0 710.9 487.9Z" fill="#666"/><circle cx="707.8" cy="491" r="4.4" fill="none" stroke="#e4e4e4" stroke-width="0.9"/><path d="M713.4 495 h2.6 l-1.3 1.6z" fill="#e0e0e0"/>
<path d="M725 487 h4.2 l1.2 1.4 h5.8 v6.8 h-11.2z" fill="#dedede"/>
<path d="M748.6 486.8 h8.8 v8.2 h-5 v-3.8 h-3.8z" fill="#e4e4e4"/><path d="M749.6 492 h2.8 v2.8z" fill="#e4e4e4"/>
<g fill="#e0e0e0"><rect x="770.4" y="488" width="9.8" height="1.5"/><rect x="773.4" y="486.2" width="3.8" height="1.6"/><path d="M771.2 490.2 h8.2 l-0.6 6 h-7z"/></g><path d="M773.6 491.2v4M775.3 491.2v4M777 491.2v4" stroke="#666" stroke-width="0.7"/>
<path d="M795.4 493.4h4.6M795.4 495.2h4.6M795.4 497h4.6" stroke="#7a7a7a" stroke-width="0.8"/>
<rect x="603.2" y="498.6" width="196.8" height="3.2" fill="#2b2b2b"/>
<rect x="603.2" y="501.8" width="196.8" height="13.4" fill="#3a3a3a"/><rect x="603.2" y="501.8" width="50" height="13.6" fill="#535353"/><rect x="653.2" y="501.8" width="0.9" height="13" fill="#2e2e2e"/><rect x="654" y="514.6" width="146" height="0.9" fill="#2e2e2e"/>
<text x="609.2" y="512.6" font-size="9.6" fill="#efefef">历史记录</text>
<path d="M788.8 507.4 h3.6 l-1.8 2.4z" fill="#d8d8d8"/><path d="M794 506h6M794 508h6M794 510h6M794 512h6" stroke="#cfcfcf" stroke-width="0.9"/>
<rect x="603.2" y="515.4" width="196.8" height="45.6" fill="#535353"/>
<rect x="603.2" y="547.2" width="196.8" height="1.3" fill="#3c3c3c"/>
<rect x="624.4" y="518.4" width="26.2" height="26.4" fill="#fff" stroke="#2a2a2a" stroke-width="0.9"/>
<g fill="#e4e4e4"><path d="M608.2 531.2 q1 -4.6 6.4 -4.6 l3 0.2 q-4.6 0.8 -6.6 4.4z"/><path d="M619.6 526.2 l0.8 0.8 l-5.4 7 q-0.8 1.6 -2.4 2.4 q-2.4 1.4 -4.4 0.8 q1.8 -0.6 2.2 -2.4 q0.8 -1.8 2.8 -1.6z"/></g><path d="M617 533 a5 5 0 0 1 -3 4.6" fill="none" stroke="#bdbdbd" stroke-width="0.8" stroke-dasharray="1 1"/>
<text x="655.2" y="535.4" font-size="10" fill="#ececec">未标题-1</text>
<rect x="608.6" y="555.4" width="7.6" height="7.6" fill="#4a4a4a" stroke="#646464" stroke-width="0.8"/>
<path d="M630.2 552.6 h8.4 l2.8 0 v9 h-11.2z" fill="#dcdcdc"/><rect x="631.4" y="553.2" width="4" height="1.4" fill="#555"/><rect x="632" y="556.2" width="7.6" height="5" fill="#7a7a7a"/>
<text x="652.4" y="562.8" font-size="10" fill="#ececec">新建</text>
<rect x="672" y="517.6" width="123.6" height="38" fill="#fff"/>
<g stroke="#c6c6c6" stroke-width="3" stroke-linejoin="round" fill="#c6c6c6"><text x="698.6" y="537.8" font-size="13.6" letter-spacing="4.2" font-weight="500">思洋互动</text><text x="693" y="550" font-size="12" letter-spacing="0.46" font-weight="bold">www.ciya.cn</text></g>
<g fill="#080808"><text x="698.6" y="537.8" font-size="13.6" letter-spacing="4.2" font-weight="500" stroke="#080808" stroke-width="0.3">思洋互动</text><text x="693" y="550" font-size="12" letter-spacing="0.46" font-weight="bold">www.ciya.cn</text></g>
</svg></body></html>
